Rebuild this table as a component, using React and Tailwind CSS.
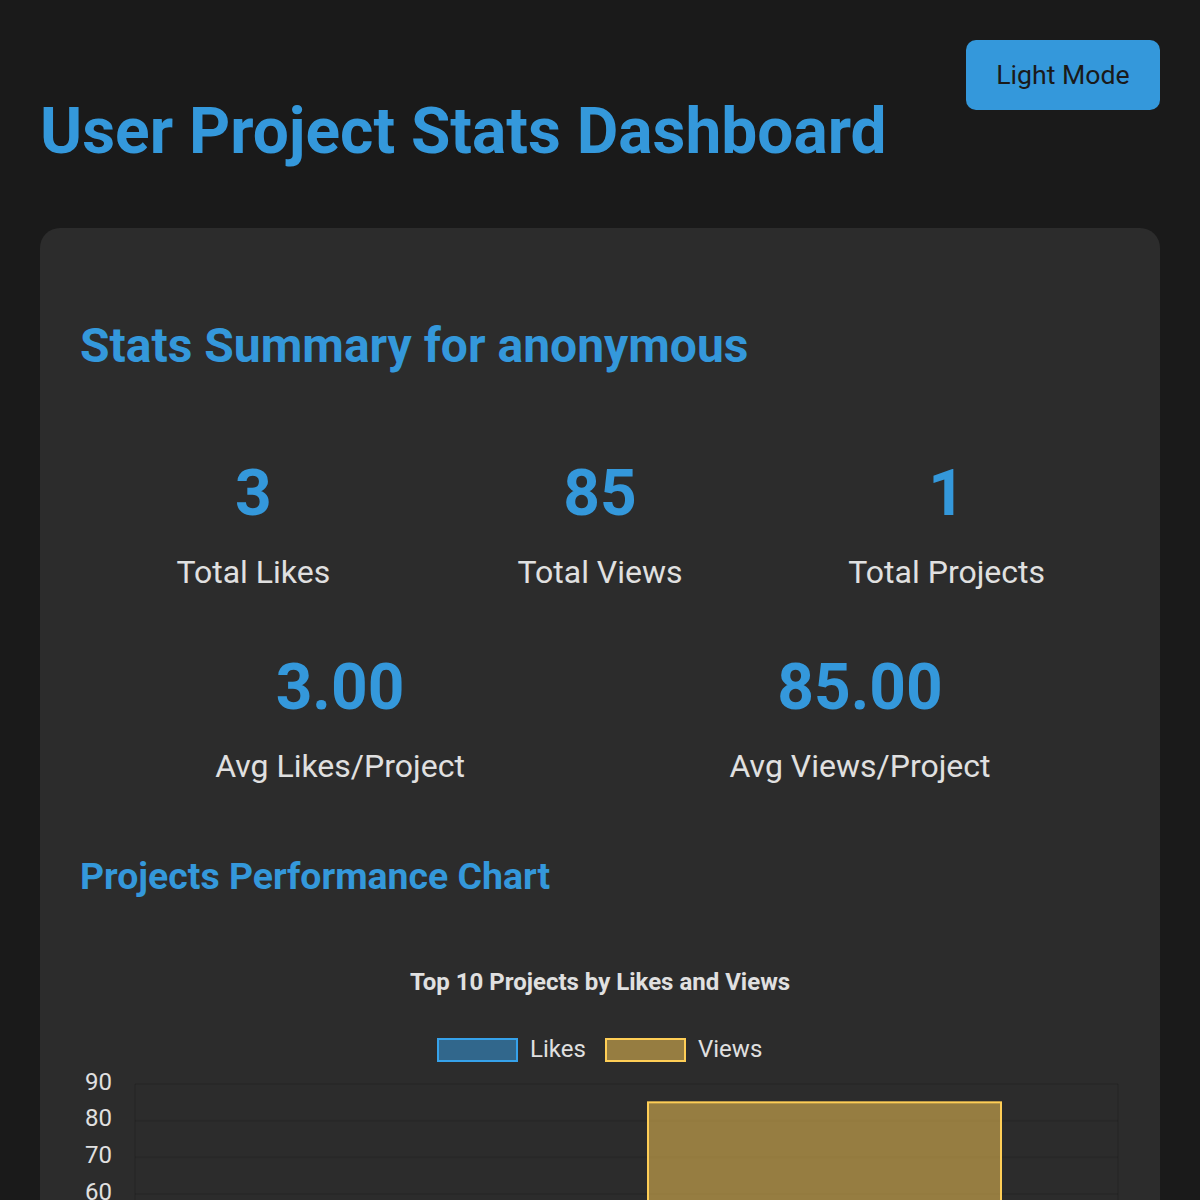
import React from 'react';

const stats = {
  username: 'anonymous',
  totalLikes: 3,
  totalViews: 85,
  totalProjects: 1,
};

const projects = [{ name: 'Project 1', likes: 3, views: 85 }];

function StatBox({ value, label }) {
  return (
    <div className="flex flex-col items-center">
      <div className="text-[64px] leading-none font-bold text-[#3498db]">{value}</div>
      <div className="mt-[30px] text-[32px] leading-none text-[#e0e0e0]">{label}</div>
    </div>
  );
}

function PerformanceChart({ data }) {
  // plot area in svg coords
  const left = 55;
  const right = 1038;
  const top = 144;
  const step = 36.67;
  const max = 90;
  const zeroY = top + step * 9;
  const yFor = (v) => zeroY - (v / max) * (zeroY - top);
  const ticks = [90, 80, 70, 60, 50, 40, 30, 20, 10, 0];
  const barWidth = 353;
  const grid = 'rgba(0,0,0,0.08)';

  return (
    <svg width="1040" height="520" viewBox="0 0 1040 520" className="block" style={{ fontFamily: 'Roboto, sans-serif' }}>
      <text x="520" y="50" textAnchor="middle" fontSize="24" fontWeight="700" fill="#e0e0e0">
        Top 10 Projects by Likes and Views
      </text>

      <rect x="358" y="99" width="79" height="22" fill="rgba(54,162,235,0.5)" stroke="rgb(54,162,235)" strokeWidth="2" />
      <text x="450" y="117" fontSize="24" fill="#e0e0e0">Likes</text>
      <rect x="526" y="99" width="79" height="22" fill="rgba(255,206,86,0.5)" stroke="rgb(255,206,86)" strokeWidth="2" />
      <text x="618" y="117" fontSize="24" fill="#e0e0e0">Views</text>

      {ticks.map((t) => (
        <g key={t}>
          <line x1={left} x2={right} y1={yFor(t)} y2={yFor(t)} stroke={grid} strokeWidth="2" />
          <text x="32" y={yFor(t) + 5.5} textAnchor="end" fontSize="24" fill="#e0e0e0">{t}</text>
        </g>
      ))}
      <line x1={left} x2={left} y1={top} y2={zeroY} stroke={grid} strokeWidth="2" />
      <line x1={right} x2={right} y1={top} y2={zeroY} stroke={grid} strokeWidth="2" />

      {data.map((p, i) => {
        const cx = 568 + i * 2 * barWidth;
        return (
          <g key={p.name}>
            <rect x={cx - barWidth} y={yFor(p.likes)} width={barWidth} height={zeroY - yFor(p.likes)} fill="rgba(54,162,235,0.5)" stroke="rgb(54,162,235)" strokeWidth="2" />
            <rect x={cx} y={yFor(p.views)} width={barWidth} height={zeroY - yFor(p.views)} fill="rgba(255,206,86,0.5)" stroke="rgb(255,206,86)" strokeWidth="2" />
            <text x={cx} y={zeroY + 30} textAnchor="middle" fontSize="24" fill="#e0e0e0">{p.name}</text>
          </g>
        );
      })}
    </svg>
  );
}

export default function App() {
  const avgLikes = (stats.totalLikes / stats.totalProjects).toFixed(2);
  const avgViews = (stats.totalViews / stats.totalProjects).toFixed(2);

  return (
    <div className="min-h-screen bg-[#1a1a1a] px-[40px] pt-[40px] pb-[40px] font-['Roboto',sans-serif]">
      <div className="flex justify-between items-start">
        <h1 className="mt-[60px] text-[64px] leading-none font-bold text-[#3498db]">User Project Stats Dashboard</h1>
        <button className="w-[194px] h-[70px] rounded-[10px] bg-[#3498db] text-[26.67px] text-[#1a1a1a] flex items-center justify-center">
          Light Mode
        </button>
      </div>

      <div className="mt-[64px] rounded-[20px] bg-[#2c2c2c] p-[40px]">
        <h2 className="mt-[54px] text-[48px] leading-none font-bold text-[#3498db]">
          Stats Summary for {stats.username}
        </h2>

        <div className="mt-[92px] grid grid-cols-3">
          <StatBox value={stats.totalLikes} label="Total Likes" />
          <StatBox value={stats.totalViews} label="Total Views" />
          <StatBox value={stats.totalProjects} label="Total Projects" />
        </div>
        <div className="mt-[68px] grid grid-cols-2">
          <StatBox value={avgLikes} label="Avg Likes/Project" />
          <StatBox value={avgViews} label="Avg Views/Project" />
        </div>

        <h3 className="mt-[76px] text-[37.4px] leading-none font-bold text-[#3498db]">Projects Performance Chart</h3>
        <div className="mt-[45px]">
          <PerformanceChart data={projects} />
        </div>
      </div>
    </div>
  );
}
